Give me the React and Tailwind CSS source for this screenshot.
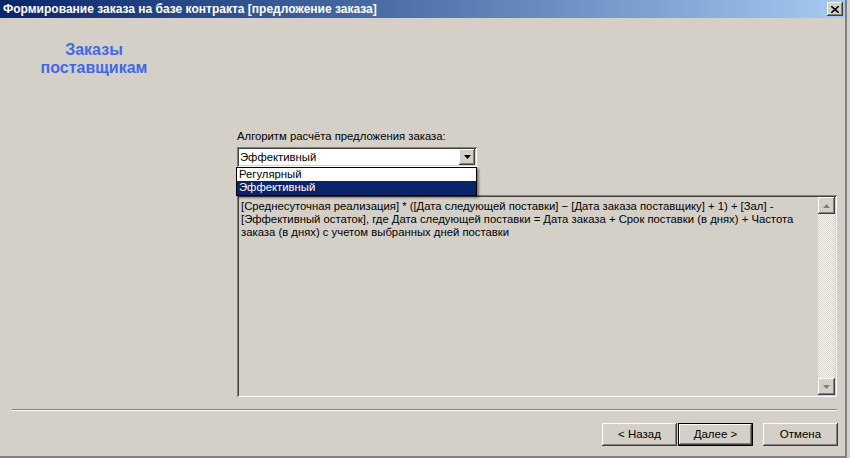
import React from "react";

const font = { fontFamily: '"Liberation Sans", Arial, sans-serif' };

const formula = [
  "[Среднесуточная реализация] * ([Дата следующей поставки] − [Дата заказа поставщику] + 1) + [Зал] -",
  "[Эффективный остаток], где Дата следующей поставки = Дата заказа + Срок поставки (в днях) + Частота",
  "заказа (в днях) с учетом выбранных дней поставки",
];

// classic raised 3d edge
const raised =
  "shadow-[inset_-1px_-1px_#404040,inset_1px_1px_#ffffff,inset_-2px_-2px_#808080]";
const sunken =
  "shadow-[inset_1px_1px_#808080,inset_-1px_-1px_#ffffff,inset_2px_2px_#404040,inset_-2px_-2px_#d4d0c8]";

function Arrow({ dir = "down", color = "#000" }) {
  const pts = dir === "down" ? "0,0 7,0 3.5,4" : "0,4 7,4 3.5,0";
  return (
    <svg width="7" height="4" viewBox="0 0 7 4">
      <polygon points={pts} fill={color} />
    </svg>
  );
}

function Button({ children, primary }) {
  return (
    <div
      className={
        "w-[75px] h-[23px] flex items-center justify-center text-[11.5px] text-black bg-[#d4d0c8] " +
        (primary
          ? "border border-black shadow-[inset_-1px_-1px_#404040,inset_1px_1px_#ffffff,inset_-2px_-2px_#808080]"
          : raised)
      }
    >
      {children}
    </div>
  );
}

export default function App() {
  return (
    <div className="w-[850px] h-[458px] bg-[#d4d0c8] overflow-hidden" style={font}>
      <div className="w-[847px] h-[458px] border-r-2 border-b-2 border-[#808080] flex flex-col">
        {/* title bar */}
        <div className="h-[18px] flex items-center justify-between pl-[3px] pr-[2px] bg-gradient-to-r from-[#0a246a] to-[#a6caf0]">
          <span className="text-white font-bold text-[12px] leading-none">
            Формирование заказа на базе контракта [предложение заказа]
          </span>
          <div
            className={
              "w-[16px] h-[14px] bg-[#d4d0c8] flex items-center justify-center " + raised
            }
          >
            <svg width="8" height="7" viewBox="0 0 8 7">
              <path d="M0 0 L8 7 M8 0 L0 7" stroke="#000" strokeWidth="1.6" />
            </svg>
          </div>
        </div>

        {/* wizard header */}
        <div className="mt-[23px] w-[188px] text-center text-[16px] leading-[18px] font-bold text-[#3e68e8]">
          Заказы
          <br />
          поставщикам
        </div>

        {/* form */}
        <div className="pl-[237px] mt-[52px]">
          <div className="text-[11.3px] leading-[14px] text-black">
            Алгоритм расчёта предложения заказа:
          </div>

          <div className="relative mt-[4px] w-[240px]">
            <div className={"h-[20px] bg-white flex items-center p-[2px] " + sunken}>
              <span className="flex-1 pl-[1px] text-[11.3px] text-black">Эффективный</span>
              <div className={"w-[16px] h-[16px] bg-[#d4d0c8] flex items-center justify-center " + raised}>
                <Arrow />
              </div>
            </div>
            {/* open dropdown */}
            <div className="absolute left-[-1px] top-[20px] w-[241px] border border-black bg-white text-[11.3px] leading-[13px] shadow-[2px_2px_2px_rgba(0,0,0,0.4)] z-10">
              <div className="h-[13px] px-[2px] text-black">Регулярный</div>
              <div className="h-[14px] px-[2px] bg-[#0a246a] text-white">Эффективный</div>
            </div>
          </div>

          {/* formula text */}
          <div className={"mt-[28px] w-[600px] h-[202px] flex p-[2px] " + sunken}>
            <div className="flex-1 min-w-0 overflow-hidden pl-[2px] pt-[3px] text-[11.3px] leading-[13px] text-black">
              {formula.map((l, i) => (
                <div key={i} className="whitespace-nowrap">
                  {l}
                </div>
              ))}
            </div>
            <div className="w-[17px] shrink-0 flex flex-col">
              <div className={"h-[17px] bg-[#d4d0c8] flex items-center justify-center " + raised}>
                <Arrow dir="up" color="#808080" />
              </div>
              <div className="flex-1 bg-[repeating-conic-gradient(#ffffff_0_25%,#d4d0c8_0_50%)] bg-[length:2px_2px]" />
              <div className={"h-[17px] bg-[#d4d0c8] flex items-center justify-center " + raised}>
                <Arrow color="#808080" />
              </div>
            </div>
          </div>
        </div>

        {/* separator */}
        <div className="mt-[12px] ml-[12px] w-[825px] border-t border-b border-t-[#808080] border-b-white" />

        {/* buttons */}
        <div className="mt-[12px] ml-[602px] flex">
          <Button>&lt; Назад</Button>
          <div className="ml-[1px]">
            <Button primary>Далее &gt;</Button>
          </div>
          <div className="ml-[10px]">
            <Button>Отмена</Button>
          </div>
        </div>
      </div>
    </div>
  );
}
